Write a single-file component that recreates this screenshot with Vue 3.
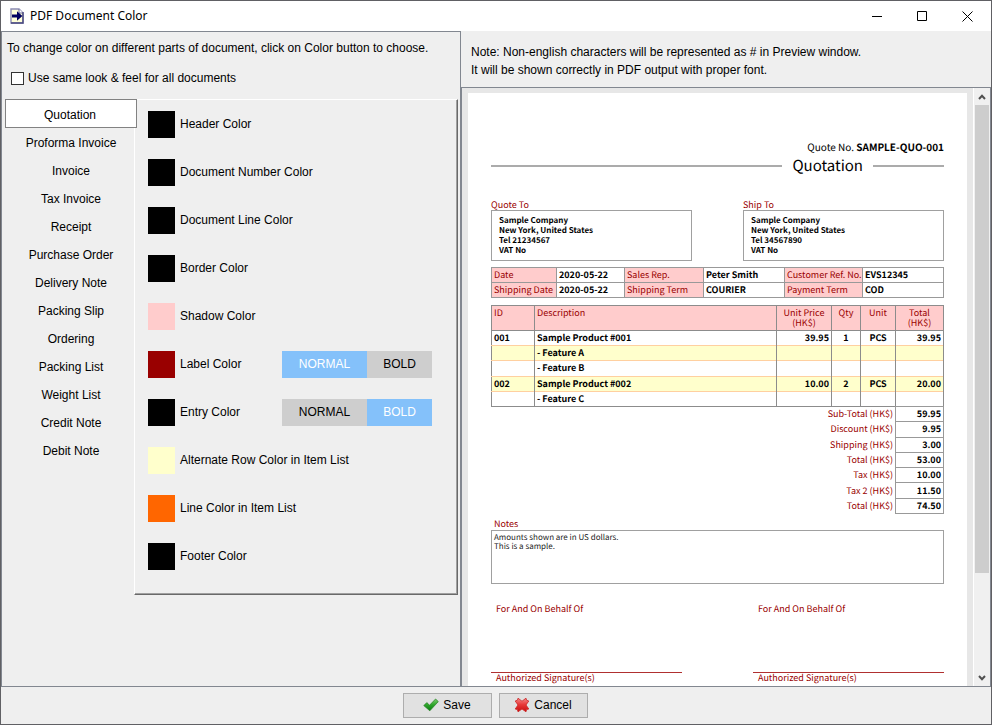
<script setup>
import { ref } from 'vue'

const sameLook = ref(false)
const activeTab = ref('Quotation')
const tabs = [
  'Quotation', 'Proforma Invoice', 'Invoice', 'Tax Invoice', 'Receipt', 'Purchase Order',
  'Delivery Note', 'Packing Slip', 'Ordering', 'Packing List', 'Weight List', 'Credit Note', 'Debit Note',
]

const colors = ref([
  { label: 'Header Color', value: '#000000' },
  { label: 'Document Number Color', value: '#000000' },
  { label: 'Document Line Color', value: '#000000' },
  { label: 'Border Color', value: '#000000' },
  { label: 'Shadow Color', value: '#ffcccc' },
  { label: 'Label Color', value: '#990000', weight: 'NORMAL' },
  { label: 'Entry Color', value: '#000000', weight: 'BOLD' },
  { label: 'Alternate Row Color in Item List', value: '#ffffcc' },
  { label: 'Line Color in Item List', value: '#ff6600' },
  { label: 'Footer Color', value: '#000000' },
])

const parties = [
  { title: 'Quote To', lines: ['Sample Company', 'New York, United States', 'Tel 21234567', 'VAT No'] },
  { title: 'Ship To', lines: ['Sample Company', 'New York, United States', 'Tel 34567890', 'VAT No'] },
]

const info = [
  [['Date', '2020-05-22'], ['Sales Rep.', 'Peter Smith'], ['Customer Ref. No.', 'EVS12345']],
  [['Shipping Date', '2020-05-22'], ['Shipping Term', 'COURIER'], ['Payment Term', 'COD']],
]

const items = [
  ['001', 'Sample Product #001', '39.95', '1', 'PCS', '39.95'],
  ['', '- Feature A', '', '', '', ''],
  ['', '- Feature B', '', '', '', ''],
  ['002', 'Sample Product #002', '10.00', '2', 'PCS', '20.00'],
  ['', '- Feature C', '', '', '', ''],
]

const totals = [
  ['Sub-Total (HK$)', '59.95'],
  ['Discount (HK$)', '9.95'],
  ['Shipping (HK$)', '3.00'],
  ['Total (HK$)', '53.00'],
  ['Tax (HK$)', '10.00'],
  ['Tax 2 (HK$)', '11.50'],
  ['Total (HK$)', '74.50'],
]
</script>

<template>
  <div class="window">
    <header class="titlebar">
      <svg class="app-icon" viewBox="0 0 14 16" aria-hidden="true">
        <path d="M1 1h8l4 4v10H1z" fill="#ffffd8" stroke="#8c8cb4" stroke-width="1.4" />
        <path d="M9 1v4h4" fill="#fff" stroke="#6a6a9c" />
        <path d="M13 4v11H1" fill="none" stroke="#4a4a80" stroke-width="1.4" />
        <path d="M2 6.5h5V3.2L12.4 8 7 12.8V9.5H2z" fill="#000060" />
      </svg>
      <h1>PDF Document Color</h1>
      <div class="window-controls">
        <button type="button" aria-label="Minimize">
          <svg viewBox="0 0 11 11"><path d="M0 5.5h10" /></svg>
        </button>
        <button type="button" aria-label="Maximize">
          <svg viewBox="0 0 11 11"><path d="M.5.5h9v9h-9z" /></svg>
        </button>
        <button type="button" aria-label="Close">
          <svg viewBox="0 0 11 11"><path d="M.5.5l10 10M10.5.5l-10 10" /></svg>
        </button>
      </div>
    </header>

    <main class="content">
      <section class="settings">
        <p class="intro">To change color on different parts of document, click on Color button to choose.</p>
        <label class="same-look">
          <input v-model="sameLook" type="checkbox" />
          <span>Use same look &amp; feel for all documents</span>
        </label>
        <div class="tabbed">
          <nav class="tabs">
            <button
              v-for="tab in tabs"
              :key="tab"
              type="button"
              :class="{ active: tab === activeTab }"
              @click="activeTab = tab"
            >{{ tab }}</button>
          </nav>
          <div class="panel">
            <div v-for="color in colors" :key="color.label" class="color-row">
              <button type="button" class="swatch" :style="{ background: color.value }" :aria-label="color.label"></button>
              <span class="color-label">{{ color.label }}</span>
              <div v-if="color.weight" class="weights">
                <button type="button" class="normal" :class="{ on: color.weight === 'NORMAL' }" @click="color.weight = 'NORMAL'">NORMAL</button>
                <button type="button" class="bold" :class="{ on: color.weight === 'BOLD' }" @click="color.weight = 'BOLD'">BOLD</button>
              </div>
            </div>
          </div>
        </div>
      </section>

      <section class="preview">
        <p class="note">
          Note: Non-english characters will be represented as # in Preview window.<br />
          It will be shown correctly in PDF output with proper font.
        </p>
        <div class="scroll-pane">
          <div class="viewport">
            <article class="page">
              <p class="number">Quote No. <b>SAMPLE-QUO-001</b></p>
              <h2><span>Quotation</span></h2>

              <div class="parties">
                <div v-for="party in parties" :key="party.title" class="party">
                  <h3>{{ party.title }}</h3>
                  <address>
                    <div v-for="line in party.lines" :key="line">{{ line }}</div>
                  </address>
                </div>
              </div>

              <table class="info">
                <colgroup>
                  <col class="w65" /><col class="w68" /><col class="w79" /><col class="w81" /><col class="w78" /><col />
                </colgroup>
                <tbody>
                  <tr v-for="(row, i) in info" :key="i">
                    <template v-for="pair in row" :key="pair[0]">
                      <th>{{ pair[0] }}</th>
                      <td>{{ pair[1] }}</td>
                    </template>
                  </tr>
                </tbody>
              </table>

              <table class="items">
                <colgroup>
                  <col class="w43" /><col /><col class="w55" /><col class="w29" /><col class="w35" /><col class="w48" />
                </colgroup>
                <thead>
                  <tr>
                    <th>ID</th>
                    <th>Description</th>
                    <th class="center">Unit Price<br />(HK$)</th>
                    <th class="center">Qty</th>
                    <th class="center">Unit</th>
                    <th class="center">Total<br />(HK$)</th>
                  </tr>
                </thead>
                <tbody>
                  <tr v-for="(row, i) in items" :key="i">
                    <td>{{ row[0] }}</td>
                    <td>{{ row[1] }}</td>
                    <td class="right">{{ row[2] }}</td>
                    <td class="center">{{ row[3] }}</td>
                    <td class="center">{{ row[4] }}</td>
                    <td class="right">{{ row[5] }}</td>
                  </tr>
                </tbody>
              </table>
              <table class="totals">
                <colgroup><col /><col class="w48" /></colgroup>
                <tbody>
                  <tr v-for="(row, i) in totals" :key="i">
                    <th>{{ row[0] }}</th>
                    <td>{{ row[1] }}</td>
                  </tr>
                </tbody>
              </table>

              <h3 class="notes-title">Notes</h3>
              <p class="notes">Amounts shown are in US dollars.<br />This is a sample.</p>

              <div class="signatures">
                <div v-for="n in 2" :key="n" class="signature">
                  <p>For And On Behalf Of</p>
                  <p class="line">Authorized Signature(s)</p>
                </div>
              </div>
            </article>
          </div>
          <div class="scrollbar">
            <button type="button" aria-label="Scroll up">
              <svg viewBox="0 0 8 6"><path d="M1 5l3-3.2L7 5" /></svg>
            </button>
            <div class="track"><div class="thumb"></div></div>
            <button type="button" aria-label="Scroll down">
              <svg viewBox="0 0 8 6"><path d="M1 1l3 3.2L7 1" /></svg>
            </button>
          </div>
        </div>
      </section>
    </main>

    <footer class="actions">
      <button type="button">
        <svg viewBox="0 0 16 16" aria-hidden="true">
          <defs>
            <linearGradient id="tick" x1="0" y1="0" x2="0" y2="1">
              <stop offset="0" stop-color="#7ccc6c" /><stop offset="0.5" stop-color="#2da52a" /><stop offset="1" stop-color="#0b7a10" />
            </linearGradient>
          </defs>
          <path d="M.8 8.600l3-3 2.700 2.600L12.600 2l2.700 2.600L6.800 13.800z" fill="url(#tick)" stroke="#1d7d1d" stroke-width=".7" stroke-linejoin="round" />
        </svg>
        <span>Save</span>
      </button>
      <button type="button">
        <svg viewBox="0 0 16 16" aria-hidden="true">
          <defs>
            <linearGradient id="cross" x1="0" y1="0" x2="0" y2="1">
              <stop offset="0" stop-color="#f58a8a" /><stop offset="0.45" stop-color="#e83a3a" /><stop offset="1" stop-color="#c80c0c" />
            </linearGradient>
          </defs>
          <path d="M4 1.200L8 4.200 12 1.200 12.600 3.200 14.800 4 12 8 14.800 12 12.600 12.600 12 14.800 8 12 4 14.800 3.400 12.600 1.200 12 4 8 1.200 4 3.400 3.200z" fill="url(#cross)" stroke="#c22" stroke-width=".8" stroke-linejoin="round" />
        </svg>
        <span>Cancel</span>
      </button>
    </footer>
  </div>
</template>

<style>
body {
  margin: 0;
}
</style>

<style scoped>
* {
  box-sizing: border-box;
}

p, h1, h2, h3, address {
  margin: 0;
  font-weight: normal;
  font-style: normal;
}

button {
  padding: 0;
  border: 0;
  background: none;
  font: inherit;
  color: inherit;
}

.window {
  display: flex;
  flex-direction: column;
  height: 100vh;
  border: 1px solid #606064;
  background: #efefef;
  color: #000;
  font: 12px/18px "Liberation Sans", Arial, sans-serif;
}

.titlebar {
  display: flex;
  align-items: center;
  height: 30px;
  flex: none;
  padding: 0 1px 0 9px;
  background: #fff;
}

.app-icon {
  width: 14px;
  height: 16px;
  margin-right: 6px;
}

.titlebar h1 {
  flex: 1;
  font: 12px/18px "Noto Sans", "Open Sans", sans-serif;
}

.window-controls {
  display: flex;
}

.window-controls button {
  display: grid;
  place-items: center;
  width: 45px;
  height: 30px;
}

.window-controls svg {
  width: 11px;
  height: 11px;
  fill: none;
  stroke: #000;
}

.content {
  display: flex;
  flex: 1;
  min-height: 0;
}

.settings {
  flex: 0 0 460px;
  padding: 7px 2px 0 3px;
  border: solid #828790;
  border-width: 1px 1px 0 1px;
}

.intro {
  padding-left: 2px;
  white-space: nowrap;
}

.same-look {
  display: flex;
  align-items: center;
  gap: 4px;
  width: max-content;
  margin: 12px 0;
  padding-left: 6px;
}

.same-look input {
  appearance: none;
  width: 13px;
  height: 13px;
  margin: 0;
  border: 1px solid #333;
  background: #fff;
}

.same-look input:checked {
  background: #333;
}

.tabbed {
  display: flex;
}

.tabs {
  display: flex;
  flex-direction: column;
  width: 132px;
  margin-right: -3px;
  z-index: 1;
}

.tabs button {
  height: 28px;
  padding-top: 2px;
}

.tabs .active {
  height: 29px;
  padding-right: 2px;
  border: 1px solid #828282;
  background: #fff;
}

.panel {
  flex: 1;
  display: flex;
  flex-direction: column;
  gap: 21px;
  padding: 11px 13px 24px;
  border: 1px solid;
  border-color: #fff #696969 #696969 #fff;
  box-shadow: inset -1px -1px #a0a0a0;
}

.color-row {
  display: flex;
  align-items: center;
  height: 27px;
}

.swatch {
  width: 27px;
  height: 27px;
  margin-right: 5px;
}

.color-label {
  padding-bottom: 2px;
  white-space: nowrap;
}

.weights {
  display: flex;
  margin: 0 12px 0 auto;
}

.weights button {
  height: 27px;
  padding-bottom: 2px;
  background: #cecece;
}

.weights .normal {
  width: 85px;
}

.weights .bold {
  width: 65px;
}

.weights .on {
  background: #84c1fa;
  color: #fff;
}

.preview {
  flex: 1;
  display: flex;
  flex-direction: column;
  min-width: 0;
}

.note {
  padding: 12px 10px 8px;
}

.scroll-pane {
  display: flex;
  flex: 1;
  min-height: 0;
  border: 1px solid #828790;
  border-bottom: 0;
  background: #e7e7e7;
}

.viewport {
  flex: 1;
  min-width: 0;
  overflow: hidden;
  padding: 5px 6px 0;
}

.page {
  padding: 46px 23px 40px;
  background: #fff;
  color: #000;
  font: 9px/10px "Noto Sans CJK SC", "Open Sans", sans-serif;
  text-rendering: geometricPrecision;
}

.scrollbar {
  display: flex;
  flex-direction: column;
  width: 17px;
  padding: 0 1px;
  border-left: 1px solid #fff;
  background: #f0f0f0;
}

.scrollbar button {
  display: grid;
  place-items: center;
  height: 17px;
}

.scrollbar svg {
  width: 8px;
  height: 6px;
  fill: none;
  stroke: #505050;
  stroke-width: 2;
}

.track {
  flex: 1;
}

.thumb {
  height: 83%;
  background: #cdcdcd;
}

.number {
  font-size: 10px;
  line-height: 16px;
  text-align: right;
}

h2 {
  display: flex;
  align-items: center;
  gap: 10px;
  font-size: 15px;
  line-height: 22px;
}

h2::before,
h2::after {
  content: "";
  flex: 1;
  height: 2px;
  background: #ababab;
}

h2::after {
  flex: 0 0 71px;
}

h3,
th {
  color: #990000;
  font-size: 9px;
  font-weight: normal;
}

.parties {
  display: flex;
  justify-content: space-between;
  margin-top: 23px;
}

.party {
  width: 201px;
}

address {
  padding: 5px 7px 4px;
  border: 1px solid #a0a0a0;
  font-size: 8px;
  font-weight: bold;
}

table {
  width: 100%;
  border-collapse: collapse;
  table-layout: fixed;
}

th,
td {
  padding: 0 2px;
  text-align: left;
  white-space: nowrap;
  line-height: 10px;
}

td {
  font-weight: bold;
}

.w29 { width: 29px; }
.w35 { width: 35px; }
.w43 { width: 43px; }
.w48 { width: 48px; }
.w55 { width: 55px; }
.w65 { width: 65px; }
.w68 { width: 68px; }
.w78 { width: 78px; }
.w79 { width: 79px; }
.w81 { width: 81px; }

.info {
  height: 31px;
  margin-top: 6px;
}

.info th,
.info td {
  border: 1px solid #999;
}

.info th,
.items th {
  background: #ffcccc;
}

.items {
  height: 102px;
  margin-top: 7px;
  border: 1px solid #8c8c8c;
}

.items th {
  height: 25px;
  padding-top: 2px;
  border: 1px solid #8c8c8c;
  vertical-align: top;
}

.items td {
  border-right: 1px solid #8c8c8c;
}

.items tbody tr + tr td {
  border-top: 1px solid #ffd0a0;
}

.items tbody tr:nth-child(2) td,
.items tbody tr:nth-child(4) td {
  background: #ffffcc;
}

.items .center {
  text-align: center;
}

.items .right,
.totals th,
.totals td {
  text-align: right;
}

.totals {
  height: 108px;
  margin-top: -1px;
}

.totals td {
  border: 1px solid #999;
}

.notes-title {
  margin-top: 5px;
  padding-left: 3px;
}

.notes {
  height: 54px;
  margin-top: 1px;
  padding: 2px;
  border: 1px solid #a0a0a0;
  color: #222;
  font-size: 8px;
  line-height: 9px;
}

.signatures {
  display: flex;
  justify-content: space-between;
  margin-top: 20px;
  color: #990000;
}

.signature {
  width: 191px;
}

.signature p {
  padding-left: 5px;
}

.signature .line {
  margin-top: 58px;
  border-top: 1px solid #b03030;
}

.actions {
  display: flex;
  justify-content: center;
  gap: 7px;
  flex: none;
  padding: 6px 2px 6px 0;
  border-top: 1px solid #828790;
}

.actions button {
  display: flex;
  align-items: center;
  justify-content: center;
  gap: 4px;
  width: 89px;
  height: 25px;
  padding-bottom: 2px;
  border: 1px solid #adadad;
  background: #e1e1e1;
}

.actions svg {
  width: 16px;
  height: 16px;
}
</style>
